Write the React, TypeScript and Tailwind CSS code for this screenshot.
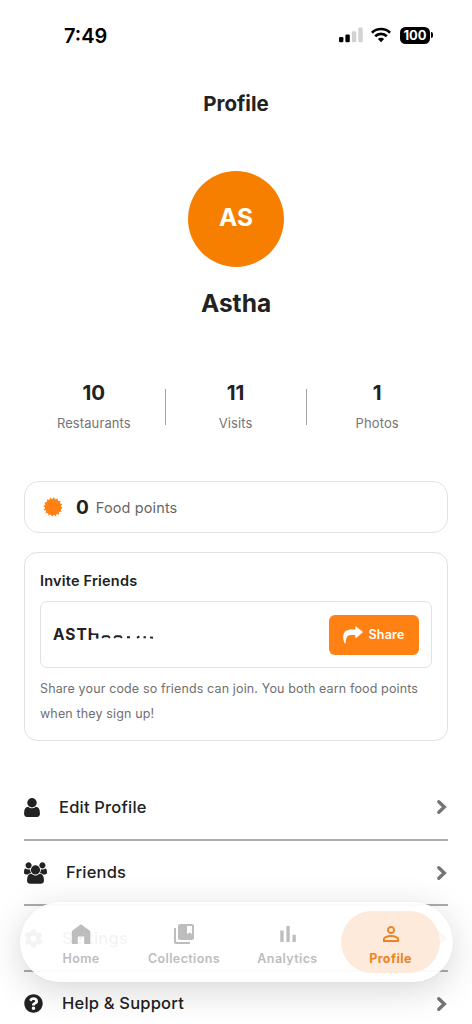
import type { ReactNode } from "react"
import { FaCog, FaQuestionCircle } from "react-icons/fa"
import { MdCollectionsBookmark, MdPersonOutline } from "react-icons/md"

const stats = [
  { value: "10", label: "Restaurants" },
  { value: "11", label: "Visits" },
  { value: "1", label: "Photos" },
]

function UserIcon() {
  return (
    <svg className="w-4 h-[19px]" viewBox="256 128 1280 1536" fill="currentColor">
      <path d="M1536 1399q0 109-62.5 187t-150.5 78h-854q-88 0-150.5-78t-62.5-187q0-85 8.5-160.5t31.5-152 58.5-131 94-89 134.5-34.5q131 128 313 128t313-128q76 0 134.5 34.5t94 89 58.5 131 31.5 152 8.5 160.5zm-256-887q0 159-112.5 271.5t-271.5 112.5-271.5-112.5-112.5-271.5 112.5-271.5 271.5-112.5 271.5 112.5 112.5 271.5z" />
    </svg>
  )
}

function GroupIcon() {
  return (
    <svg className="w-[23px] h-[22px]" viewBox="64 0 1920 1792" fill="currentColor">
      <path d="M657 896q-162 5-265 128h-134q-82 0-138-40.5t-56-118.5q0-353 124-353 6 0 43.5 21t97.5 42.5 119 21.5q67 0 133-23-5 37-5 66 0 139 81 256zm1071 637q0 120-73 189.5t-194 69.5h-874q-121 0-194-69.5t-73-189.5q0-53 3.5-103.5t14-109 26.5-108.5 43-97.5 62-81 85.5-53.5 111.5-20q10 0 43 21.5t73 48 107 48 135 21.5 135-21.5 107-48 73-48 43-21.5q61 0 111.5 20t85.5 53.5 62 81 43 97.5 26.5 108.5 14 109 3.5 103.5zm-1024-1277q0 106-75 181t-181 75-181-75-75-181 75-181 181-75 181 75 75 181zm704 384q0 159-112.5 271.5t-271.5 112.5-271.5-112.5-112.5-271.5 112.5-271.5 271.5-112.5 271.5 112.5 112.5 271.5zm576 225q0 78-56 118.5t-138 40.5h-134q-103-123-265-128 81-117 81-256 0-29-5-66 66 23 133 23 59 0 119-21.5t97.5-42.5 43.5-21q124 0 124 353zm-128-609q0 106-75 181t-181 75-181-75-75-181 75-181 181-75 181 75 75 181z" />
    </svg>
  )
}

function Chevron() {
  return (
    <svg className="w-3 h-4 text-[#757575]" viewBox="0 0 12 16" fill="none" stroke="currentColor" strokeWidth="3.4" strokeLinecap="round">
      <path d="M2.8 2.7L8.3 8L2.8 13.3" />
    </svg>
  )
}

function BurstIcon() {
  const teeth = 16
  const points = Array.from({ length: teeth * 2 }, (_, i) => {
    const r = i % 2 === 0 ? 9.7 : 7.8
    const a = (Math.PI * (i + 0.5)) / teeth
    return `${(10 + r * Math.cos(a)).toFixed(2)},${(10 + r * Math.sin(a)).toFixed(2)}`
  }).join(" ")
  return (
    <svg className="w-5 h-5 text-[#ff8114]" viewBox="0 0 20 20" fill="currentColor">
      <polygon points={points} />
    </svg>
  )
}

const menu: { label: string; icon: ReactNode }[] = [
  { label: "Edit Profile", icon: <UserIcon /> },
  { label: "Friends", icon: <GroupIcon /> },
  { label: "Settings", icon: <FaCog size={19} /> },
  { label: "Help & Support", icon: <FaQuestionCircle size={19} /> },
]

function StatusBar() {
  return (
    <div className="h-[70px] pl-16 pr-[39px] flex items-center justify-between text-black">
      <span className="pt-px text-[20px] font-semibold">7:49</span>
      <div className="flex items-center">
        <svg className="w-6 h-4 mr-[8px]" viewBox="0 0 24 16" fill="currentColor">
          <rect x="0" y="10" width="4.4" height="5.3" rx="1.2" />
          <rect x="6.4" y="7.6" width="4.4" height="7.7" rx="1.2" />
          <rect x="12.9" y="4.2" width="4.4" height="11.1" rx="1.2" fill="#d2d2d2" />
          <rect x="19.3" y="0.6" width="4.4" height="14.7" rx="1.2" fill="#d2d2d2" />
        </svg>
        <svg className="w-5 h-4 mr-[9px]" viewBox="0 0 20 16" fill="none" stroke="currentColor" strokeWidth="2.7">
          <path d="M0.9 5.7a13 13 0 0 1 18.2 0" />
          <path d="M4.2 9.3a8.3 8.3 0 0 1 11.6 0" />
          <path d="M10 15.2L6.9 12.1a4.4 4.4 0 0 1 6.2 0z" fill="currentColor" stroke="none" />
        </svg>
        <div className="w-[30px] h-[17px] rounded-[5.5px] bg-black text-white text-[13px] leading-[17px] font-bold flex items-center justify-center">
          100
        </div>
        <div className="w-[2px] h-[6px] ml-px rounded-r-full bg-black" />
      </div>
    </div>
  )
}

function InviteCard() {
  return (
    <div className="h-[189px] mt-[19px] px-[15px] border border-[#e2e2e2] rounded-[13px]">
      <h2 className="mt-[18px] h-5 leading-5 text-[14.5px] font-semibold tracking-[0.2px]">Invite Friends</h2>
      <div className="mt-[10px] h-[67px] border border-[#e2e2e2] rounded-[7px] px-3 flex items-center justify-between">
        <div className="relative text-[15.5px] font-bold tracking-[1px]">
          ASTH
          {/* the rest of the code is rubbed out */}
          <svg className="absolute left-0 top-0 w-[110px] h-6" viewBox="0 0 110 24">
            <path d="M39 4H50V10.4H39z" fill="#fff" />
            <path d="M41 15.6H50V20H41z" fill="#fff" />
            <g fill="none" stroke="#222" strokeWidth="1.9">
              <path d="M49 14.9l1.8-1.6h4.4l1.8 1.6" />
              <path d="M61 14.9l1.8-1.6h4.4l1.8 1.6" />
              <path d="M74 14.2h3M84 14.9l2.4-1.5M90.5 14.2h2.4M97 14.4l3 .3" />
            </g>
          </svg>
        </div>
        <button className="w-[90px] h-10 pt-px rounded-[6px] bg-[#ff8114] text-white flex items-center justify-center gap-[5px] text-[12.5px] font-semibold tracking-[0.2px]">
          <svg className="w-5 h-[18px]" viewBox="0 0 20 18" fill="currentColor">
            <path d="M12.3 0.9Q12.3 0 13 .5L19.4 5.6Q20 6.2 19.4 6.8L13 12Q12.3 12.4 12.3 11.7V9.1H8.5C4.2 9.1 2.9 11.2 2.7 17.2H1.6C.5 14.8 0 12.4 .3 9.8C.8 5.5 3.6 3.4 8.5 3.4H12.3z" />
          </svg>
          Share
        </button>
      </div>
      <p className="mt-2 text-[12.5px] leading-[25px] tracking-[0.14px] text-[#707070]">
        Share your code so friends can join. You both earn food points when they sign up!
      </p>
    </div>
  )
}

function TabBar() {
  return (
    <nav className="absolute left-5 top-[902px] w-[433px] h-[80px] rounded-[40px] bg-white/95 shadow-[0_0_1px_rgba(0,0,0,0.15),0_8px_36px_rgba(0,0,0,0.16)] px-[11px] flex items-center text-[12.5px] leading-5 font-semibold tracking-[0.4px] text-[#bdbdbd]">
      <div className="w-[100px] pt-[6px] flex flex-col items-center gap-[3px]">
        <svg className="w-6 h-6" viewBox="0 0 24 24" fill="currentColor">
          <path d="M12 2.3L21.2 9V22H15.2V14.4H8.8V22H2.8V9z" />
        </svg>
        Home
      </div>
      <div className="w-[106px] pt-[6px] flex flex-col items-center gap-[3px]">
        <MdCollectionsBookmark size={26} className="h-6" />
        Collections
      </div>
      <div className="w-[101px] pt-[6px] flex flex-col items-center gap-[3px]">
        <svg className="w-6 h-6" viewBox="0 0 24 24" fill="currentColor">
          <path d="M4.3 8.6h3.3V20H4.3zM10.4 4h3.3v16h-3.3zM16.5 12.8h3.3V20h-3.3z" />
        </svg>
        Analytics
      </div>
      <div className="w-[99px] h-[62px] ml-[3px] pt-[6px] rounded-[31px] bg-[#fdeadb] text-[#f08223] font-bold flex flex-col items-center justify-center gap-[3px] shrink-0">
        <MdPersonOutline size={26} className="h-6" />
        Profile
      </div>
    </nav>
  )
}

function App() {
  return (
    <div className="relative w-[472px] h-[1024px] overflow-hidden bg-white text-[#222] font-['Inter',sans-serif]">
      <StatusBar />
      <h1 className="mt-[20px] h-7 leading-7 text-center text-[20.5px] font-bold">Profile</h1>

      <div className="px-6">
        <div className="mt-[53px] mx-auto w-24 h-24 rounded-full bg-[#f77f00] text-white text-[24.5px] font-bold flex items-center justify-center pb-[4px]">
          AS
        </div>
        <p className="mt-5 h-8 leading-8 text-center text-[24.5px] font-bold">Astha</p>

        {/* Stats */}
        <div className="mt-[55px] h-[65px] -mr-px flex items-center">
          {stats.map((stat, i) => (
            <div key={stat.label} className="flex flex-1 items-center">
              {i > 0 && <div className="w-px h-9 -ml-px bg-[#a3a3a3]" />}
              <div className="flex-1 pb-[2px] pr-[2px] text-center">
                <p className="h-7 leading-7 text-[20.5px] font-bold">{stat.value}</p>
                <p className="mt-[6px] h-5 leading-5 text-[13px] tracking-[0.1px] text-[#757575]">{stat.label}</p>
              </div>
            </div>
          ))}
        </div>

        {/* Points */}
        <div className="mt-[42px] h-[52px] pl-[18px] border border-[#e2e2e2] rounded-[15px] flex items-center">
          <BurstIcon />
          <span className="ml-[13px] pt-[2px] text-[19px] font-bold">0</span>
          <span className="ml-[7px] pt-px text-[14.5px] tracking-[0.12px] text-[#666]">Food points</span>
        </div>

        <InviteCard />

        {/* Menu */}
        <div className="mt-[34px]">
          {menu.map((item) => (
            <div key={item.label} className="h-[65.5px] pt-px border-b-2 border-[#acacac] flex items-center justify-between">
              <div className="flex items-center gap-[19px]">
                {item.icon}
                <span className="text-[16.5px] font-medium tracking-[0.2px]">{item.label}</span>
              </div>
              <Chevron />
            </div>
          ))}
        </div>
      </div>

      <TabBar />
    </div>
  )
}

export default App
